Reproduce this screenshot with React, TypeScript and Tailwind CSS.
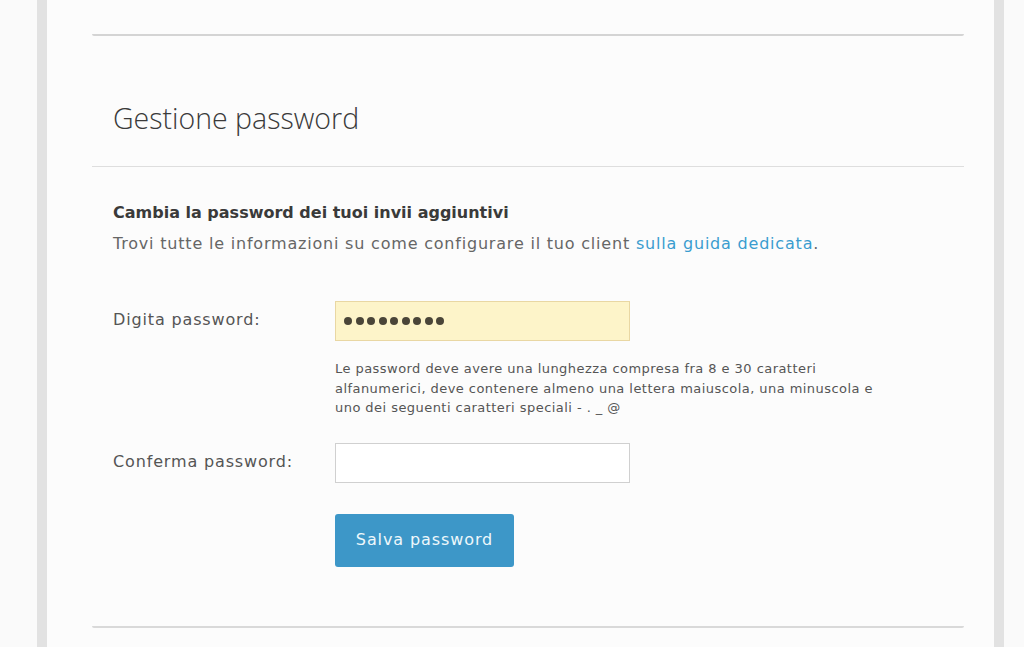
export default function App() {
  const dots = Array.from({ length: 9 });
  return (
    <div className="w-full bg-[#fafafa] font-['DejaVu_Sans',sans-serif] overflow-hidden h-[647px]">
      <div className="ml-[37px] w-[967px] h-[647px] border-x-[10px] border-[#e2e2e2] bg-[#fcfcfc]">
        {/* previous card, only its bottom edge shows */}
        <div className="ml-[45px] mr-[30px] h-[36px] border-b-2 border-[#d4d4d4] rounded-b-[2px]" />

        <div className="ml-[45px] mr-[30px] mt-[20px] h-[572px] border-b-2 border-[#d9d9d9] rounded-b-[2px] flex flex-col">
          <div className="h-[111px] border-b border-[#dedede] flex items-center pl-[21px] pt-[14px]">
            <h2 className="font-['Open_Sans',sans-serif] text-[28.5px] font-light text-[#3a3a3a]">Gestione password</h2>
          </div>

          <div className="pl-[21px] pt-[34px]">
            <p className="text-[16px] font-bold text-[#3a3a3a] leading-[24px]">
              Cambia la password dei tuoi invii aggiuntivi
            </p>
            <p className="text-[16px] tracking-[0.8px] text-[#666] leading-[24px] mt-[7px]">
              Trovi tutte le informazioni su come configurare il tuo client{" "}
              <a className="text-[#3a9ccf]">sulla guida dedicata</a>.
            </p>

            <div className="mt-[45px] flex">
              <label className="w-[222px] pt-[7px] text-[16px] tracking-[0.85px] text-[#555]">Digita password:</label>
              <div className="flex flex-col">
                <div className="w-[295px] h-[40px] bg-[#fdf4c9] border border-[#e9d7a3] flex items-center gap-[3.5px] pl-[8px]">
                  {dots.map((_, i) => (
                    <span key={i} className="w-[8px] h-[8px] rounded-full bg-[#4a4538]" />
                  ))}
                </div>
                <p className="mt-[18px] w-[600px] text-[13px] tracking-[0.45px] leading-[19.5px] text-[#555]">
                  Le password deve avere una lunghezza compresa fra 8 e 30 caratteri
                  <br />
                  alfanumerici, deve contenere almeno una lettera maiuscola, una minuscola e
                  <br />
                  uno dei seguenti caratteri speciali - . _ @
                </p>
              </div>
            </div>

            <div className="mt-[25px] flex">
              <label className="w-[222px] pt-[7px] text-[16px] tracking-[0.85px] text-[#555]">Conferma password:</label>
              <div className="w-[295px] h-[40px] bg-white border border-[#d0d0d0]" />
            </div>

            <div className="mt-[31px] pl-[222px]">
              <button className="w-[179px] h-[53px] bg-[#3d97c8] rounded-[3px] text-[16px] tracking-[0.9px] text-[#eef7fb]">
                Salva password
              </button>
            </div>
          </div>
        </div>
      </div>
    </div>
  );
}
